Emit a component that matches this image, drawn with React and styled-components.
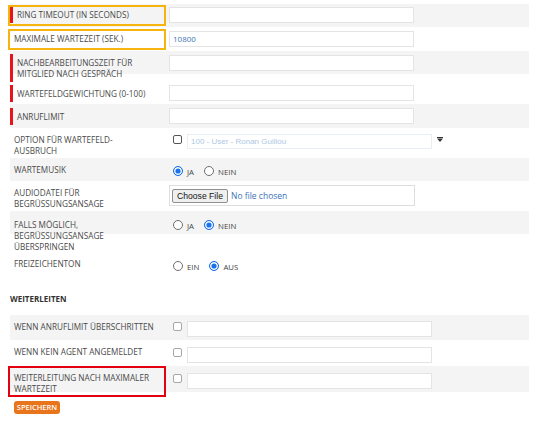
import React from 'react';
import styled, { createGlobalStyle } from 'styled-components';

const Global = createGlobalStyle`
  html, body { margin: 0; padding: 0; background: #fff; }
  body { font-family: "Open Sans", "Liberation Sans", sans-serif; }
  * { box-sizing: border-box; }
`;

const Page = styled.div`
  width: 529px;
  padding: 4px 0 0 10px;
`;

const Row = styled.div`
  display: flex;
  align-items: flex-start;
  height: ${p => p.$h}px;
  background: ${p => (p.$gray ? '#f4f4f4' : 'transparent')};
`;

const LabelCell = styled.div`
  position: relative;
  flex: 0 0 155px;
  align-self: stretch;
`;

const LabelText = styled.div`
  margin-top: ${p => p.$mt}px;
  padding: 3px 0 3px 4px;
  border-left: ${p => (p.$marked ? '3px solid #e8141c' : '0')};
  font-size: 8.2px;
  line-height: 11px;
  color: #4a4a4a;
  text-transform: uppercase;
  white-space: nowrap;
`;

const Frame = styled.div`
  position: absolute;
  left: -2px;
  right: -1px;
  top: ${p => p.$top}px;
  bottom: ${p => p.$bottom}px;
  border: 2px solid ${p => p.$color};
  pointer-events: none;
`;

const ValueCell = styled.div`
  display: flex;
  align-items: flex-start;
  margin-top: ${p => p.$mt}px;
  padding-left: 4px;
`;

const TextInput = styled.div`
  width: ${p => p.$w || 245}px;
  height: 16px;
  border: 1px solid #e4e4e4;
  background: #fff;
  padding: 0 3px;
  font-size: 8px;
  line-height: 14px;
  color: #3d78b5;
`;

const Checkbox = styled.span`
  display: inline-block;
  width: 9px;
  height: 9px;
  margin: 1px 5px 0 4px;
  border: ${p => (p.$muted ? '1.3px solid #a6a6a6' : '1px solid #555')};
  border-radius: 2px;
  background: #fff;
`;

const SelectBox = styled.div`
  width: 245px;
  height: 15px;
  border: 1px solid #e9eef5;
  background: #fff;
  padding-left: 3px;
  font-family: "Liberation Sans", Arial, sans-serif;
  font-size: 8px;
  line-height: 13px;
  color: #aec7e4;
  white-space: nowrap;
`;

const Caret = styled.svg`
  margin: 3px 0 0 5px;
`;

const RadioGroup = styled.div`
  display: flex;
  align-items: center;
  padding-left: 4px;
`;

const RadioOption = styled.label`
  display: flex;
  align-items: center;
  gap: 4px;
  margin-right: 10px;
`;

const RadioDot = styled.span`
  display: inline-block;
  width: 10px;
  height: 10px;
  border-radius: 50%;
  border: 1px solid ${p => (p.$on ? '#1a73e8' : '#6f6f6f')};
  background: ${p => (p.$on ? '#1a73e8' : '#fff')};
  box-shadow: ${p => (p.$on ? 'inset 0 0 0 1.4px #fff' : 'none')};
`;

const RadioText = styled.span`
  font-size: 7.8px;
  padding-top: 2px;
  color: #444;
  text-transform: uppercase;
`;

const FileBox = styled.div`
  width: 246px;
  height: 21px;
  border: 1px solid #dedede;
  background: #fff;
  display: flex;
  align-items: center;
  padding-left: 2px;
  gap: 3px;
`;

const FileButton = styled.button`
  width: 56px;
  height: 14px;
  padding: 0;
  border: 1px solid #8f8f8f;
  border-radius: 2px;
  background: #efefef;
  font-family: "Liberation Sans", Arial, sans-serif;
  font-size: 8.6px;
  line-height: 12px;
  color: #111;
`;

const FileText = styled.span`
  font-size: 8.5px;
  color: #3b74b9;
`;

const Heading = styled.div`
  height: 33px;
  line-height: 33px;
  font-size: 8px;
  font-weight: 700;
  color: #333;
  text-transform: uppercase;
`;

const SaveButton = styled.button`
  margin: 9px 0 0 4px;
  width: 46px;
  height: 13px;
  padding: 0;
  border: 0;
  border-radius: 3px;
  background: #e8741c;
  color: #fff;
  font-family: "Open Sans", "Liberation Sans", sans-serif;
  font-size: 7.5px;
  font-weight: 600;
  line-height: 13px;
  text-transform: uppercase;
`;

const Label = ({ lines, mt = 3, marked, frame }) => (
  <LabelCell>
    <LabelText $mt={mt} $marked={marked}>
      {lines.map((l, i) => (
        <React.Fragment key={i}>
          {i > 0 && <br />}
          {l}
        </React.Fragment>
      ))}
    </LabelText>
    {frame && <Frame $color={frame.color} $top={frame.top} $bottom={frame.bottom} />}
  </LabelCell>
);

const Radios = ({ options, on }) => (
  <RadioGroup>
    {options.map((o, i) => (
      <RadioOption key={o}>
        <RadioDot $on={i === on} />
        <RadioText>{o}</RadioText>
      </RadioOption>
    ))}
  </RadioGroup>
);

export default function App() {
  return (
    <>
      <Global />
      <Page>
        <Row $h={23} $gray>
          <Label lines={['Ring Timeout (in seconds)']} mt={2} marked frame={{ color: '#f6b40e', top: 1, bottom: 1 }} />
          <ValueCell $mt={3}><TextInput /></ValueCell>
        </Row>
        <Row $h={24}>
          <Label lines={['Maximale Wartezeit (Sek.)']} mt={3} frame={{ color: '#f6b40e', top: 2, bottom: 1 }} />
          <ValueCell $mt={4}><TextInput>10800</TextInput></ValueCell>
        </Row>
        <Row $h={23} $gray>
          <Label lines={['Nachbearbeitungszeit für', 'Mitglied nach Gespräch']} mt={3} marked />
          <ValueCell $mt={4}><TextInput /></ValueCell>
        </Row>
        <Row $h={30}>
          <Label lines={['Wartefeldgewichtung (0-100)']} mt={11} marked />
          <ValueCell $mt={11}><TextInput /></ValueCell>
        </Row>
        <Row $h={24} $gray>
          <Label lines={['Anruflimit']} mt={4} marked />
          <ValueCell $mt={4}><TextInput /></ValueCell>
        </Row>
        <Row $h={30}>
          <Label lines={['Option für Wartefeld-', 'Ausbruch']} mt={3} />
          <ValueCell $mt={6}>
            <Checkbox />
            <SelectBox>100 - User - Ronan Guillou</SelectBox>
            <Caret width="6" height="5" viewBox="0 0 6 5">
              <rect x="0" y="0" width="6" height="1" fill="#333" />
              <path d="M0 1.5 L6 1.5 L3 5 Z" fill="#333" />
            </Caret>
          </ValueCell>
        </Row>
        <Row $h={23} $gray>
          <Label lines={['Wartemusik']} mt={3} />
          <ValueCell $mt={7}><Radios options={['Ja', 'Nein']} on={0} /></ValueCell>
        </Row>
        <Row $h={30}>
          <Label lines={['Audiodatei für', 'Begrüssungsansage']} mt={3} />
          <ValueCell $mt={4}>
            <FileBox>
              <FileButton type="button">Choose File</FileButton>
              <FileText>No file chosen</FileText>
            </FileBox>
          </ValueCell>
        </Row>
        <Row $h={23} $gray>
          <Label lines={['Falls möglich,', 'Begrüssungsansage', 'überspringen']} mt={5} />
          <ValueCell $mt={8}><Radios options={['Ja', 'Nein']} on={1} /></ValueCell>
        </Row>
        <Row $h={48}>
          <Label lines={['Freizeichenton']} mt={21} />
          <ValueCell $mt={26}><Radios options={['Ein', 'Aus']} on={1} /></ValueCell>
        </Row>
        <Heading>Weiterleiten</Heading>
        <Row $h={25} $gray>
          <Label lines={['Wenn Anruflimit überschritten']} mt={3} />
          <ValueCell $mt={6}><Checkbox $muted /><TextInput /></ValueCell>
        </Row>
        <Row $h={26}>
          <Label lines={['Wenn kein Agent angemeldet']} mt={3} />
          <ValueCell $mt={7}><Checkbox $muted /><TextInput /></ValueCell>
        </Row>
        <Row $h={26} $gray>
          <Label lines={['Weiterleitung nach maximaler', 'Wartezeit']} mt={3} frame={{ color: '#e3000f', top: 0, bottom: -5 }} />
          <ValueCell $mt={7}><Checkbox $muted /><TextInput /></ValueCell>
        </Row>
        <SaveButton type="button">Speichern</SaveButton>
      </Page>
    </>
  );
}
